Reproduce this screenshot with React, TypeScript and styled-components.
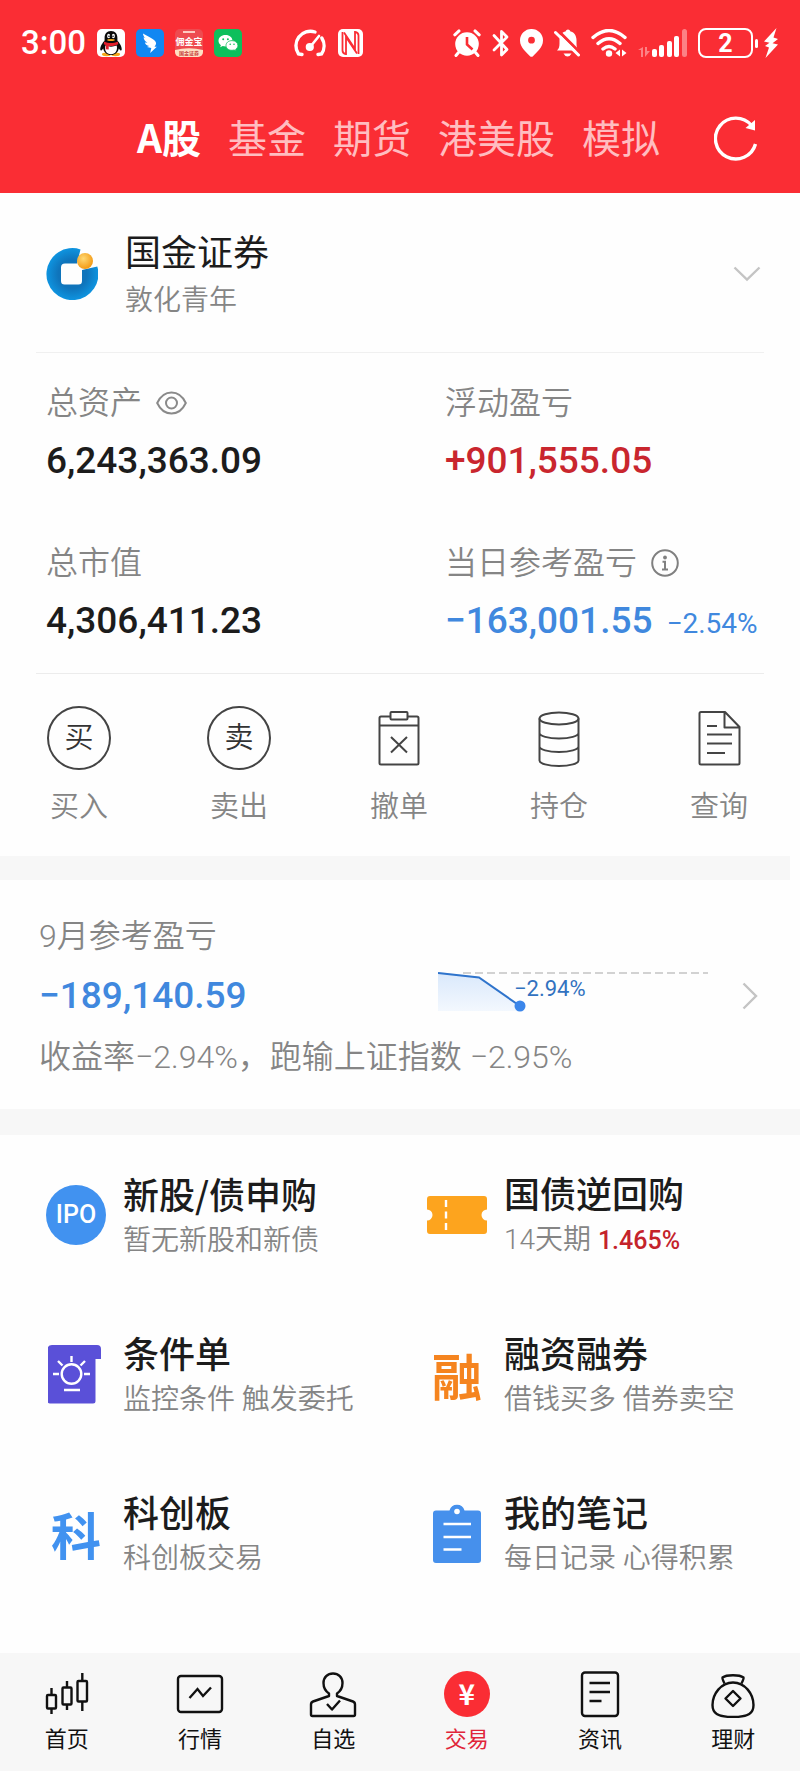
import React from "react";
import styled, { createGlobalStyle } from "styled-components";

const GlobalStyle = createGlobalStyle`
  * { box-sizing: border-box; }
  body {
    margin: 0;
    background: #fefefe;
    font-family: Roboto, "Noto Sans CJK SC", sans-serif;
    -webkit-font-smoothing: antialiased;
  }
  button { border: 0; padding: 0; background: none; font: inherit; color: inherit; cursor: pointer; }
  a { color: inherit; text-decoration: none; }
  h1, h2, p, dl, dd { margin: 0; font-weight: 400; }
  svg { display: block; flex: none; }
`;

const red = "#fa2d34";
const blue = "#4088de";

const Page = styled.div`
  display: flex;
  flex-direction: column;
  min-height: 100vh;
`;

const Header = styled.header`
  background: ${red};
  color: #fff;
`;

const StatusBar = styled.div`
  display: flex;
  align-items: center;
  justify-content: space-between;
  height: 86px;
  padding: 0 22px 0 21px;
`;

const StatusGroup = styled.div`
  display: flex;
  align-items: center;
  gap: 11px;
`;

const Time = styled.time`
  font-size: 33px;
  line-height: 40px;
  font-weight: 500;
`;

const SystemIcons = styled(StatusGroup)`
  margin-left: 40px;
`;

const BatteryWrap = styled.span`
  display: flex;
  align-items: center;
  gap: 6px;
`;

const Battery = styled.span`
  display: flex;
  align-items: center;
  gap: 2px;
`;

const BatteryBody = styled.span`
  width: 55px;
  height: 30px;
  border: 2px solid #fff;
  border-radius: 8px;
  font-size: 25px;
  line-height: 27px;
  font-weight: 700;
  text-align: center;
`;

const BatteryTip = styled.span`
  width: 3px;
  height: 9px;
  border-radius: 2px;
  background: #fff;
`;

const TabRow = styled.div`
  display: flex;
  align-items: center;
  justify-content: space-between;
  height: 107px;
  padding: 0 42px 2px 137px;
`;

const Tabs = styled.nav`
  display: flex;
  gap: 27px;
  padding-bottom: 6px;
`;

const Tab = styled.button<{ $active?: boolean }>`
  font-family: "Noto Sans CJK SC", sans-serif;
  font-size: 39px;
  line-height: 52px;
  font-weight: ${(p) => (p.$active ? 700 : 400)};
  color: ${(p) => (p.$active ? "#fff" : "#ffbdc0")};
  white-space: nowrap;
`;

const Account = styled.button`
  display: flex;
  align-items: center;
  gap: 27px;
  margin: 0 36px;
  padding: 35px 3px 33px 10px;
  border-bottom: 1px solid #f0f0f0;
  text-align: left;
`;

const AccountText = styled.span`
  display: flex;
  flex-direction: column;
  flex: 1;
  gap: 11px;
`;

const Title = styled.span<{ $medium?: boolean }>`
  font-family: "Noto Sans CJK SC", sans-serif;
  font-size: 36px;
  line-height: 44px;
  font-weight: ${(p) => (p.$medium ? 500 : 400)};
  color: #1c1c1c;
  white-space: nowrap;
`;

const Caption = styled.span`
  font-size: 28px;
  line-height: 36px;
  font-weight: 350;
  color: #858585;
  white-space: nowrap;
`;

const Stats = styled.dl`
  display: grid;
  grid-template-columns: 5fr 4fr;
  row-gap: 58px;
  margin: 0 36px;
  padding: 30px 0 28px 10px;
  border-bottom: 1px solid #ececec;
`;

const Stat = styled.div`
  display: flex;
  flex-direction: column;
  gap: 14px;
`;

const StatLabel = styled.dt`
  display: flex;
  align-items: center;
  gap: 14px;
  font-size: 32px;
  line-height: 40px;
  font-weight: 350;
  color: #858585;
  white-space: nowrap;
`;

const Value = styled.dd<{ $color?: string }>`
  display: flex;
  align-items: baseline;
  gap: 14px;
  font-size: 37px;
  line-height: 48px;
  font-weight: 500;
  color: ${(p) => p.$color ?? "#1c1c1c"};
  white-space: nowrap;
`;

const Rate = styled.span`
  font-size: 28px;
  line-height: 32px;
  font-weight: 400;
`;

const Actions = styled.div`
  display: flex;
  justify-content: space-between;
  padding: 32px 49px 31px 47px;
`;

const Action = styled.button`
  display: flex;
  flex-direction: column;
  align-items: center;
  gap: 19px;
  width: 64px;
  font-size: 29px;
  line-height: 36px;
  font-weight: 350;
  color: #858585;
  white-space: nowrap;
`;

const RoundGlyph = styled.span`
  width: 64px;
  height: 64px;
  border: 2px solid #444;
  border-radius: 50%;
  font-size: 29px;
  line-height: 60px;
  color: #333;
`;

const Band = styled.div<{ $height: number; $end?: number }>`
  height: ${(p) => p.$height}px;
  margin-right: ${(p) => p.$end ?? 0}px;
  background: #f7f7f7;
`;

const Month = styled.section`
  padding: 36px 42px 32px 39px;
`;

const Note = styled.p`
  font-size: 32px;
  line-height: 40px;
  font-weight: 350;
  color: #858585;
  white-space: nowrap;
`;

const MonthRow = styled.a`
  display: flex;
  align-items: center;
  justify-content: space-between;
  margin: 16px 0 17px;
`;

const MonthValue = styled.span`
  flex: 1;
  font-size: 37px;
  line-height: 48px;
  font-weight: 500;
  color: ${blue};
`;

const Trend = styled.svg`
  margin-right: 34px;
`;

const Features = styled.section`
  display: grid;
  grid-template-columns: 1fr 1fr;
  gap: 71px 54px;
  padding: 35px 46px 76px;
`;

const Feature = styled.a`
  display: flex;
  align-items: center;
  gap: 17px;
`;

const FeatureIcon = styled.span`
  display: flex;
  flex: none;
  align-items: center;
  justify-content: center;
  width: 60px;
`;

const FeatureText = styled.span`
  display: flex;
  flex-direction: column;
  gap: 8px;
`;

const Ipo = styled.span`
  width: 60px;
  height: 60px;
  border-radius: 50%;
  background: #4192f0;
  color: #fff;
  font-size: 25px;
  line-height: 60px;
  font-weight: 500;
  text-align: center;
`;

const WordMark = styled.span<{ $color: string }>`
  font-family: "Noto Sans CJK SC", sans-serif;
  font-size: 50px;
  line-height: 60px;
  font-weight: 700;
  color: ${(p) => p.$color};
`;

const Strong = styled.span`
  font-size: 25px;
  font-weight: 500;
  color: #c4232b;
`;

const BottomNav = styled.nav`
  display: grid;
  grid-template-columns: repeat(6, 1fr);
  margin-top: auto;
  padding: 17px 0 16px;
  background: #f7f7f7;
`;

const NavItem = styled.a<{ $active?: boolean }>`
  display: flex;
  flex-direction: column;
  align-items: center;
  gap: 7px;
  font-size: 22px;
  line-height: 30px;
  color: ${(p) => (p.$active ? "#e0253a" : "#111")};
`;

const YuanBadge = styled.span`
  width: 46px;
  height: 46px;
  margin: 1px 0;
  border-radius: 50%;
  background: ${red};
  color: #fff;
  font-family: "Noto Sans CJK SC", sans-serif;
  font-size: 28px;
  line-height: 44px;
  font-weight: 700;
  text-align: center;
`;

/* Status bar drawings */

const QqIcon = () => (
  <svg width="28" height="28" viewBox="0 0 28 28">
    <rect width="28" height="28" rx="5" fill="#fff" />
    <ellipse cx="9.5" cy="25.3" rx="4.6" ry="1.9" fill="#f5a81c" />
    <ellipse cx="18.5" cy="25.3" rx="4.6" ry="1.9" fill="#f5a81c" />
    <path d="M14 2C9.6 2 7.6 5 7.6 9v2.5C5.500 14 3 17.500 3.300 20.800c.4 1.600 1.700.4 2.900-1.300C7 23.500 10 26 14 26s7-2.500 7.800-6.500c1.200 1.700 2.500 2.900 2.900 1.300.3-3.300-2.200-6.800-4.300-9.300V9c0-4-2-7-6.400-7z" fill="#0a0a0a" />
    <path d="M8.300 16.500c3.700 1.500 7.700 1.500 11.400 0 1.200 4.500-1 8.700-5.700 8.700s-6.900-4.200-5.700-8.700z" fill="#fff" />
    <path d="M7.200 12.600c4.300 2 9.300 2 13.600 0l.5 2.700c-3.500 1.600-6.800 2-9.600 1.700v3.600l-3-.3v-4.200l-1.900-.8z" fill="#e3202b" />
    <ellipse cx="11.600" cy="7" rx="1.500" ry="2.200" fill="#fff" />
    <ellipse cx="16.400" cy="7" rx="1.500" ry="2.200" fill="#fff" />
    <circle cx="12" cy="7.200" r=".8" />
    <circle cx="16" cy="7.200" r=".8" />
    <ellipse cx="14" cy="11" rx="3.800" ry="1.100" fill="#f5a81c" />
  </svg>
);

const DingIcon = () => (
  <svg width="28" height="28" viewBox="0 0 28 28">
    <rect width="28" height="28" rx="5" fill="#1187f2" />
    <path d="M7 4.500c4.500 2.800 10.500 5 12.600 8.200.9 1.500.5 3-1.100 5h2.300L14.200 24l1.100-5.100-4.300-1 2.200-.9c-2.600-.5-3.900-1.800-4.300-3.500l2.500.3C8.900 12.200 7.700 10.300 7.600 8.300l2 .9C7.800 7.800 7.100 6.300 7 4.500z" fill="#fff" />
  </svg>
);

const BrokerIcon = () => (
  <svg width="28" height="28" viewBox="0 0 28 28">
    <rect width="28" height="28" rx="5" fill="#ee4b50" />
    <path d="M0 21Q14 17.500 28 21v2a5 5 0 0 1-5 5H5a5 5 0 0 1-5-5z" fill="#ffe0c4" />
    <path d="M8 3h12" stroke="#ffc9c0" strokeWidth="2" />
    <text x="14" y="16" textAnchor="middle" fontSize="9" fontWeight="700" fill="#fff">佣金宝</text>
    <text x="14" y="26" textAnchor="middle" fontSize="5" fontWeight="700" fill="#c9483f">国金证券</text>
  </svg>
);

const WechatIcon = () => (
  <svg width="28" height="28" viewBox="0 0 28 28">
    <rect width="28" height="28" rx="5" fill="#0dbf5c" />
    <path d="M11.500 6C7.300 6 4.500 8.600 4.500 11.800c0 1.800.9 3.300 2.400 4.400l-.7 2 2.500-1.200c.9.300 1.800.4 2.800.4 4.200 0 7-2.500 7-5.600S15.700 6 11.500 6z" fill="#fff" />
    <path d="M18 11.600c-3.500 0-6 2.200-6 4.900s2.500 4.800 6 4.800c.8 0 1.500-.1 2.200-.3l2 1-.5-1.700c1.300-.9 2.200-2.200 2.200-3.800 0-2.700-2.500-4.900-5.900-4.900z" fill="#fff" stroke="#0dbf5c" strokeWidth=".8" />
    <circle cx="9.200" cy="10.300" r="1" fill="#0dbf5c" />
    <circle cx="13.900" cy="10.300" r="1" fill="#0dbf5c" />
    <circle cx="16.200" cy="15.300" r=".8" fill="#0dbf5c" />
    <circle cx="20" cy="15.300" r=".8" fill="#0dbf5c" />
  </svg>
);

const GaugeIcon = () => (
  <svg width="34" height="30" viewBox="0 0 34 30" fill="none" stroke="#fff" strokeWidth="3.400" strokeLinecap="round">
    <path d="M9 26.500l-3.500-.5A14.500 14.500 0 0 1 22 4" />
    <path d="M28.800 10A14.500 14.500 0 0 1 28.500 26l-3.500.5" />
    <path d="M26 8L17.500 18.500" strokeWidth="2.600" />
    <circle cx="16.800" cy="19" r="2.400" fill="#fff" />
  </svg>
);

const NfcIcon = () => (
  <svg width="25" height="28" viewBox="0 0 25 28">
    <rect width="25" height="28" rx="5" fill="#fff" />
    <g fill="none" stroke={red} strokeWidth="1.800">
      <path d="M4.500 3v18.500q0 3 3.500 3.500V8l11 16.500" />
      <path d="M20.500 25V6.500q0-3-3.500-3.500v17L6 3.500" />
    </g>
  </svg>
);

const AlarmIcon = () => (
  <svg width="28" height="28" viewBox="0 0 28 28">
    <circle cx="14" cy="15" r="11.800" fill="#fff" />
    <g stroke="#fff" strokeWidth="3" strokeLinecap="round">
      <path d="M1.800 5.800L6 1.900M26.200 5.800L22 1.900M5.500 23.500L3 26.500M22.500 23.500l2.500 3" />
    </g>
    <path d="M14 8v7.500l5.500 5" fill="none" stroke={red} strokeWidth="2.600" />
  </svg>
);

const BluetoothIcon = () => (
  <svg width="17" height="28" viewBox="0 0 17 28" fill="none" stroke="#fff" strokeWidth="2.800" strokeLinejoin="round" strokeLinecap="round">
    <path d="M2 6.500l13 14-5.500 5.500V2.500L15 8 2 21" />
  </svg>
);

const PinIcon = () => (
  <svg width="23" height="28" viewBox="0 0 23 28">
    <path fillRule="evenodd" d="M11.500 0A11.400 11.400 0 0 0 0 11.500C0 19 7 23.500 9.800 27q1.700 1.700 3.400 0C16 23.500 23 19 23 11.500A11.400 11.400 0 0 0 11.500 0zm0 7.800a3.400 3.400 0 1 1 0 6.800 3.400 3.400 0 0 1 0-6.800z" fill="#fff" />
  </svg>
);

const MutedIcon = () => (
  <svg width="26" height="28" viewBox="0 0 26 28">
    <path d="M3 21.500c2-2 2.500-4 2.500-7V11c0-5 3-8 6-8.500 1-2.700 4-2.700 5 0 3 .5 6 3.500 6 8.500v3.500c0 3 .5 5 2 7z" fill="#fff" />
    <path d="M9.500 24.500h8q-1.500 3-4 3t-4-3z" fill="#fff" />
    <path d="M3.500 1l23 23" stroke={red} strokeWidth="3" />
    <path d="M1.500 3.500L24.500 26" stroke="#fff" strokeWidth="3" strokeLinecap="round" />
  </svg>
);

const WifiIcon = () => (
  <svg width="36" height="28" viewBox="0 0 36 28" fill="none" stroke="#fff" strokeWidth="3.400" strokeLinecap="round">
    <path d="M2 8.500Q18-5.500 34 8.500M7 14.500q11-9.500 22 0M12 20q6-5 12 0" />
    <circle cx="18" cy="24.500" r="3.200" fill="#fff" stroke="none" />
    <path d="M29 20.500v7l-4.500-3.500zM31 20.500v7l4.500-3.500z" fill="#fff" stroke="none" />
  </svg>
);

const SignalIcon = () => (
  <svg width="49" height="28" viewBox="0 0 49 28" fill="#fff">
    <g opacity=".4">
      <path d="M5 18v10H3v-7H0zM7 18v10l5-6H9v-4z" />
      <rect x="44" y="0" width="5" height="28" rx="2.500" />
    </g>
    <rect x="14" y="20" width="5" height="8" rx="2" />
    <rect x="21" y="16" width="5" height="12" rx="2" />
    <rect x="29" y="12" width="5" height="16" rx="2" />
    <rect x="36" y="7" width="5" height="21" rx="2" />
  </svg>
);

const BoltIcon = () => (
  <svg width="14" height="30" viewBox="0 0 14 30">
    <path d="M12.500 0L0 13.500l5.500 1.200L1 18l4 1.500L1.500 30 14 16.500l-5.500-1.200L14 11l-4.500-1.500z" fill="#fff" />
  </svg>
);

const RefreshIcon = () => (
  <svg width="44" height="46" viewBox="0 0 44 46">
    <path d="M41.500 28A20.400 20.400 0 1 1 37.500 9.500" fill="none" stroke="#fff" strokeWidth="3.400" />
    <path d="M41 4v10.500l-9.500-2.500z" fill="#fff" />
  </svg>
);

/* Account drawings */

const BrokerLogo = () => (
  <svg width="52" height="52" viewBox="0 0 52 52">
    <defs>
      <radialGradient id="ring" cx=".5" cy=".5" r=".55">
        <stop offset=".5" stopColor="#0f74bb" />
        <stop offset="1" stopColor="#0e9be8" />
      </radialGradient>
      <radialGradient id="ball" cx=".4" cy=".35" r=".65">
        <stop offset="0" stopColor="#ffd873" />
        <stop offset="1" stopColor="#f39a14" />
      </radialGradient>
    </defs>
    <path d="M34.500 1.400A26 26 0 1 0 51.300 18.500L36 22v11q0 3.500-3.500 3.500h-14Q15 36.500 15 33V19.500Q15 15.500 19 15.500h12z" fill="url(#ring)" />
    <circle cx="39" cy="13" r="8" fill="url(#ball)" />
  </svg>
);

const ChevronDown = () => (
  <svg width="28" height="16" viewBox="0 0 28 16" fill="none" stroke="#c4c4c4" strokeWidth="2.400">
    <path d="M1.500 1.500L14 13.500 26.500 1.500" />
  </svg>
);

const ChevronRight = () => (
  <svg width="16" height="28" viewBox="0 0 16 28" fill="none" stroke="#c4c4c4" strokeWidth="2.400">
    <path d="M1.500 1.500L14 14 1.500 26.500" />
  </svg>
);

const EyeIcon = () => (
  <svg width="31" height="24" viewBox="0 0 31 24" fill="none" stroke="#8a8a8a" strokeWidth="2">
    <path d="M1.200 12C4.500 5 9.500 1.500 15.500 1.500S26.500 5 29.800 12c-3.300 7-8.300 10.500-14.300 10.500S4.500 19 1.200 12z" />
    <circle cx="15.500" cy="12" r="5.500" />
  </svg>
);

const InfoIcon = () => (
  <svg width="28" height="28" viewBox="0 0 28 28" fill="none" stroke="#808080" strokeWidth="2">
    <circle cx="14" cy="14" r="12.800" />
    <circle cx="14" cy="8.500" r="1.900" fill="#808080" stroke="none" />
    <path d="M11.500 12.800H14v7.500M11 20.500h6" />
  </svg>
);

/* Trade action drawings */

const CancelIcon = () => (
  <svg width="64" height="64" viewBox="0 0 64 64" fill="none" stroke="#444" strokeWidth="2">
    <path d="M23 10.500h-9q-1.500 0-1.500 1.500v45q0 1.500 1.500 1.500h36q1.500 0 1.500-1.500V12q0-1.500-1.500-1.500h-9M12.500 19.500h39" />
    <rect x="23.500" y="6" width="17" height="7.500" rx="1" />
    <path d="M24 31l16 15.500M40 31L24 46.500" />
  </svg>
);

const HoldingIcon = () => (
  <svg width="64" height="64" viewBox="0 0 64 64" fill="none" stroke="#444" strokeWidth="2">
    <ellipse cx="32" cy="12.500" rx="19.500" ry="6" />
    <path d="M12.500 12.500v42c0 3 8.500 5.500 19.500 5.500s19.500-2.500 19.500-5.500v-42M12.500 27c0 3 8.500 5.500 19.500 5.500S51.500 30 51.500 27M12.500 40.500c0 3 8.500 5.500 19.500 5.500s19.500-2.500 19.500-5.500" />
  </svg>
);

const QueryIcon = () => (
  <svg width="64" height="64" viewBox="0 0 64 64" fill="none" stroke="#444" strokeWidth="2" strokeLinejoin="round">
    <path d="M38 6H14q-1.500 0-1.500 1.500v49.500q0 1.500 1.500 1.500h37q1.500 0 1.500-1.500V21zM37.500 6v15.500h15" />
    <path d="M20 20h10M20 28.500h25M20 37.500h25M20 47h18" />
  </svg>
);

/* Feature drawings */

const TicketIcon = () => (
  <svg width="60" height="40" viewBox="0 0 60 40">
    <path d="M3 1h54q3 0 3 3v10.500a5.500 5.500 0 0 0 0 11V36q0 3-3 3H3q-3 0-3-3V25.500a5.500 5.500 0 0 0 0-11V4q0-3 3-3z" fill="#fda41e" />
    <path d="M19 5v31" stroke="#fff" strokeWidth="2.400" strokeDasharray="7 4.500" />
  </svg>
);

const ConditionIcon = () => (
  <svg width="56" height="60" viewBox="0 0 56 60">
    <path d="M4 1h45q4 0 4 4v10h-5.500v42q0 2.500-2.500 2.500H2q-2.500 0-2.500-2.500V5.500Q-.5 1 4 1z" fill="#5a50d8" />
    <g fill="none" stroke="#fff" strokeWidth="2.400">
      <circle cx="23.500" cy="30" r="9.800" />
      <path d="M23.500 12v6M10 17l4.500 4.500M37 17l-4.500 4.500M5 30h6M36 30h6M16 46h16" />
    </g>
  </svg>
);

const NotesIcon = () => (
  <svg width="48" height="60" viewBox="0 0 48 60">
    <path d="M3 7.500h13.500a7.800 7.800 0 0 1 15 0H45q3 0 3 3V57q0 3-3 3H3q-3 0-3-3V10.500q0-3 3-3z" fill="#4690ec" />
    <circle cx="24" cy="8.500" r="2.800" fill="#fff" />
    <path d="M10.500 21H38M10.500 34H38M10.500 46.500h18" stroke="#fff" strokeWidth="2.400" />
  </svg>
);

/* Bottom navigation drawings */

const CandlesIcon = () => (
  <svg width="48" height="48" viewBox="0 0 48 48" fill="none" stroke="#111" strokeWidth="2.400">
    <rect x="4" y="25" width="9" height="13.500" rx="1" />
    <rect x="19.500" y="17.500" width="9" height="17" rx="1" />
    <rect x="34.500" y="11" width="9.500" height="20.500" rx="1" />
    <path d="M8.500 18v7M8.500 38.500V44M24 11v6.500M24 34.500V40M39.300 3v8M39.300 31.500V41" />
  </svg>
);

const QuotesIcon = () => (
  <svg width="48" height="48" viewBox="0 0 48 48" fill="none" stroke="#111" strokeWidth="2.400">
    <rect x="2" y="6" width="44" height="36" rx="3" />
    <path d="M13.500 28l8-9 5.500 7 8-8.500" />
  </svg>
);

const WatchIcon = () => (
  <svg width="48" height="48" viewBox="0 0 48 48" fill="none" stroke="#111" strokeWidth="2.400" strokeLinejoin="round">
    <path d="M20 23.500C15.500 20.500 14.500 17 14.500 13c0-5.500 4-9.500 9.500-9.500s9.500 4 9.500 9.500c0 4-1 7.500-5.500 10.500v2.500l16 5.500q2 .7 2 3v10q0 1.500-1.500 1.500h-41Q2 46 2 44.500v-10q0-2.300 2-3L20 26z" />
    <path d="M18 34l5 5.500 8-9" />
  </svg>
);

const NewsIcon = () => (
  <svg width="48" height="48" viewBox="0 0 48 48" fill="none" stroke="#111" strokeWidth="2.400">
    <rect x="6" y="2.500" width="36" height="43.500" rx="3" />
    <path d="M13.500 13H34M13.500 22H34M13.500 31h12" />
  </svg>
);

const WealthIcon = () => (
  <svg width="48" height="48" viewBox="0 0 48 48" fill="none" stroke="#111" strokeWidth="2.400" strokeLinejoin="round">
    <path d="M15.500 13.500C14 10 13 9 13.500 7.500c4-3 17-3 21 0 .5 1.500-.5 2.500-2 6" />
    <path d="M24 12.500C12 12.500 3.500 24 3.500 35c0 8 4.500 12 20.500 12s20.500-4 20.500-12C44.500 24 36 12.500 24 12.500z" />
    <path d="M24 21l7.500 7.500L24 36l-7.500-7.500z" />
  </svg>
);

const TrendChart = () => (
  <Trend width="270" height="48" viewBox="0 0 270 48" role="img" aria-label="收益走势">
    <defs>
      <linearGradient id="fade" x1="0" y1="0" x2="0" y2="1">
        <stop offset="0" stopColor="#d9e8fb" />
        <stop offset="1" stopColor="#f3f8fe" />
      </linearGradient>
    </defs>
    <path d="M0 0l41 5 41 30v4H0z" fill="url(#fade)" />
    <path d="M25 1H270" stroke="#d2d2d2" strokeWidth="2" strokeDasharray="8 4" />
    <path d="M0 1l41 4.500L82 34" fill="none" stroke="#2f74cc" strokeWidth="2" />
    <circle cx="82" cy="34" r="5.500" fill="#3b86ea" />
    <text x="76" y="24" fontSize="22" fill="#3272c0">−2.94%</text>
  </Trend>
);

const tabs = ["A股", "基金", "期货", "港美股", "模拟"];

const actions = [
  { label: "买入", icon: <RoundGlyph>买</RoundGlyph> },
  { label: "卖出", icon: <RoundGlyph>卖</RoundGlyph> },
  { label: "撤单", icon: <CancelIcon /> },
  { label: "持仓", icon: <HoldingIcon /> },
  { label: "查询", icon: <QueryIcon /> },
];

const features: { title: string; caption: React.ReactNode; icon: React.ReactNode }[] = [
  { title: "新股/债申购", caption: "暂无新股和新债", icon: <Ipo>IPO</Ipo> },
  { title: "国债逆回购", caption: <>14天期 <Strong>1.465%</Strong></>, icon: <TicketIcon /> },
  { title: "条件单", caption: "监控条件 触发委托", icon: <ConditionIcon /> },
  { title: "融资融券", caption: "借钱买多 借券卖空", icon: <WordMark $color="#f5841f">融</WordMark> },
  { title: "科创板", caption: "科创板交易", icon: <WordMark $color="#4192f0">科</WordMark> },
  { title: "我的笔记", caption: "每日记录 心得积累", icon: <NotesIcon /> },
];

const navItems = [
  { label: "首页", icon: <CandlesIcon /> },
  { label: "行情", icon: <QuotesIcon /> },
  { label: "自选", icon: <WatchIcon /> },
  { label: "交易", icon: <YuanBadge>¥</YuanBadge>, active: true },
  { label: "资讯", icon: <NewsIcon /> },
  { label: "理财", icon: <WealthIcon /> },
];

export default function App() {
  return (
    <Page>
      <GlobalStyle />
      <Header>
        <StatusBar>
          <StatusGroup>
            <Time>3:00</Time>
            <QqIcon />
            <DingIcon />
            <BrokerIcon />
            <WechatIcon />
            <SystemIcons>
              <GaugeIcon />
              <NfcIcon />
            </SystemIcons>
          </StatusGroup>
          <StatusGroup>
            <AlarmIcon />
            <BluetoothIcon />
            <PinIcon />
            <MutedIcon />
            <WifiIcon />
            <SignalIcon />
            <BatteryWrap>
              <Battery>
                <BatteryBody>2</BatteryBody>
                <BatteryTip />
              </Battery>
              <BoltIcon />
            </BatteryWrap>
          </StatusGroup>
        </StatusBar>
        <TabRow>
          <Tabs>
            {tabs.map((t, i) => (
              <Tab key={t} $active={i === 0}>{t}</Tab>
            ))}
          </Tabs>
          <button aria-label="刷新"><RefreshIcon /></button>
        </TabRow>
      </Header>

      <Account>
        <BrokerLogo />
        <AccountText>
          <Title>国金证券</Title>
          <Caption>敦化青年</Caption>
        </AccountText>
        <ChevronDown />
      </Account>

      <Stats>
        <Stat>
          <StatLabel>总资产<button aria-label="隐藏金额"><EyeIcon /></button></StatLabel>
          <Value>6,243,363.09</Value>
        </Stat>
        <Stat>
          <StatLabel>浮动盈亏</StatLabel>
          <Value $color="#c9262e">+901,555.05</Value>
        </Stat>
        <Stat>
          <StatLabel>总市值</StatLabel>
          <Value>4,306,411.23</Value>
        </Stat>
        <Stat>
          <StatLabel>当日参考盈亏<button aria-label="说明"><InfoIcon /></button></StatLabel>
          <Value $color={blue}>−163,001.55<Rate>−2.54%</Rate></Value>
        </Stat>
      </Stats>

      <Actions>
        {actions.map((a) => (
          <Action key={a.label}>
            {a.icon}
            <span>{a.label}</span>
          </Action>
        ))}
      </Actions>

      <Band $height={24} $end={10} />

      <Month>
        <Note as="h2">9月参考盈亏</Note>
        <MonthRow href="#month">
          <MonthValue>−189,140.59</MonthValue>
          <TrendChart />
          <ChevronRight />
        </MonthRow>
        <Note>收益率−2.94%，跑输上证指数 −2.95%</Note>
      </Month>

      <Band $height={26} />

      <Features>
        {features.map((f) => (
          <Feature key={f.title} href="#feature">
            <FeatureIcon>{f.icon}</FeatureIcon>
            <FeatureText>
              <Title $medium>{f.title}</Title>
              <Caption>{f.caption}</Caption>
            </FeatureText>
          </Feature>
        ))}
      </Features>

      <BottomNav>
        {navItems.map((n) => (
          <NavItem key={n.label} href="#nav" $active={n.active}>
            {n.icon}
            <span>{n.label}</span>
          </NavItem>
        ))}
      </BottomNav>
    </Page>
  );
}
